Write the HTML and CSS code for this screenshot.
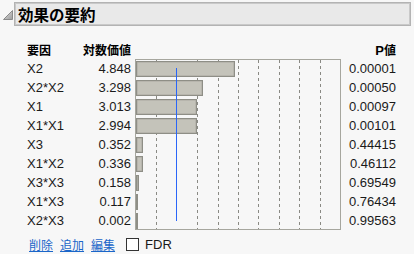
FILE: index.html
```html
<html>
<head>
<meta charset="utf-8">
<link rel="stylesheet" href="styles.css">
</head>
<body>
  <div class="outline">
    <svg class="twisty" width="10" height="10" viewBox="0 0 10 10">
      <defs>
        <linearGradient id="tg" x1="0" y1="0" x2="1" y2="1">
          <stop offset="0" stop-color="#e2e2e2"/>
          <stop offset="1" stop-color="#9c9c9c"/>
        </linearGradient>
      </defs>
      <polygon points="9.5,0.5 9.5,9.5 0.5,9.5" fill="url(#tg)" stroke="#8a8a8a" stroke-width="1"/>
    </svg>
    <div class="title">効果の要約</div>
  </div>

  <div class="report">
    <div class="hd jp">要因</div>
    <div class="hd jp num">対数価値</div>
    <div class="hd pcol"><span>P</span><span class="jp">値</span></div>

    <div class="chart">
      <div class="grid" style="left:10%"></div>
      <div class="grid" style="left:30%"></div>
      <div class="grid" style="left:40%"></div>
      <div class="grid" style="left:50%"></div>
      <div class="grid" style="left:60%"></div>
      <div class="grid" style="left:70%"></div>
      <div class="grid" style="left:80%"></div>
      <div class="grid" style="left:90%"></div>
      <div class="bars">
        <div class="row"><div class="bar" style="width:48.48%"></div></div>
        <div class="row"><div class="bar" style="width:32.98%"></div></div>
        <div class="row"><div class="bar" style="width:30.13%"></div></div>
        <div class="row"><div class="bar" style="width:29.94%"></div></div>
        <div class="row"><div class="bar" style="width:3.52%"></div></div>
        <div class="row"><div class="bar" style="width:3.36%"></div></div>
        <div class="row"><div class="bar" style="width:1.58%"></div></div>
        <div class="row"><div class="bar" style="width:1.17%"></div></div>
        <div class="row"><div class="bar" style="width:0.02%"></div></div>
      </div>
      <div class="ref"></div>
    </div>

    <div class="name">X2</div><div class="val">4.848</div><div class="pv">0.00001</div>
    <div class="name">X2*X2</div><div class="val">3.298</div><div class="pv">0.00050</div>
    <div class="name">X1</div><div class="val">3.013</div><div class="pv">0.00097</div>
    <div class="name">X1*X1</div><div class="val">2.994</div><div class="pv">0.00101</div>
    <div class="name">X3</div><div class="val">0.352</div><div class="pv">0.44415</div>
    <div class="name">X1*X2</div><div class="val">0.336</div><div class="pv">0.46112</div>
    <div class="name">X3*X3</div><div class="val">0.158</div><div class="pv">0.69549</div>
    <div class="name">X1*X3</div><div class="val">0.117</div><div class="pv">0.76434</div>
    <div class="name">X2*X3</div><div class="val">0.002</div><div class="pv">0.99563</div>
  </div>

  <div class="footer">
    <a class="jp" href="#">削除</a>
    <a class="jp" href="#">追加</a>
    <a class="jp" href="#">編集</a>
    <span class="check"></span>
    <span class="fdr">FDR</span>
  </div>
</body>
</html>
```

FILE: styles.css
```css
body {
  margin: 0;
  padding-top: 2px;
  background: #f7f7f7;
  color: #1a1a1a;
  font-family: "Liberation Sans", "Noto Sans CJK JP", sans-serif;
  font-size: 13px;
}
.jp {
  font-family: "Noto Sans CJK JP", sans-serif;
  font-size: 12px;
}
.outline {
  display: flex;
  align-items: flex-end;
}
.twisty {
  margin: 0 1px 6px 3px;
}
.title {
  flex: 1;
  margin-right: 3px;
  height: 24px;
  box-sizing: border-box;
  border: 1px solid #b3b3b3;
  box-shadow: inset 0 0 0 1px #c9c9c9;
  background: #e9e9e9;
  font-family: "Noto Sans CJK JP", sans-serif;
  font-weight: bold;
  font-size: 15.5px;
  line-height: 22px;
  padding-left: 3px;
  color: #000;
}
.report {
  margin-top: 14px;
  padding-left: 27px;
  display: grid;
  grid-template-columns: 56px 48px 4px 206px 55px;
  grid-auto-rows: 19px;
  align-items: center;
}
.hd {
  font-weight: bold;
  color: #000;
}
.num {
  text-align: right;
}
.pcol {
  grid-column: 5;
  text-align: right;
}
.name {
  grid-column: 1;
}
.val {
  grid-column: 2;
  text-align: right;
}
.pv {
  grid-column: 5;
  text-align: right;
}
.chart {
  grid-column: 4;
  grid-row: 2 / span 9;
  align-self: stretch;
  height: 171px;
  box-sizing: border-box;
  border: 1px solid #a6a69e;
  position: relative;
}
.grid {
  position: absolute;
  top: 0;
  bottom: 0;
  width: 1px;
  background: repeating-linear-gradient(to bottom, #8a8a84 0 3px, transparent 3px 6px);
}
.bars {
  position: relative;
  display: flex;
  flex-direction: column;
}
.row {
  height: 19px;
  padding-top: 1px;
  box-sizing: border-box;
}
.bar {
  height: 16px;
  min-width: 1px;
  box-sizing: border-box;
  background: #c4c3ba;
  border: 1px solid #8e8e86;
  box-shadow: inset 0 0 0 0.5px #a9a89f;
}
.ref {
  position: absolute;
  left: 40px;
  top: 8px;
  bottom: 8px;
  width: 0;
  border-left: 1px solid #2a66f8;
  z-index: 2;
}
.footer {
  margin-top: 5px;
  padding-left: 29px;
  display: flex;
  align-items: center;
  height: 18px;
}
.footer a {
  color: #1a66c9;
  text-decoration: underline;
  margin-right: 7px;
}
.check {
  margin-left: 4px;
  width: 13px;
  height: 13px;
  box-sizing: border-box;
  border: 1px solid #333;
  background: #fff;
}
.fdr {
  margin-left: 6px;
}
```
